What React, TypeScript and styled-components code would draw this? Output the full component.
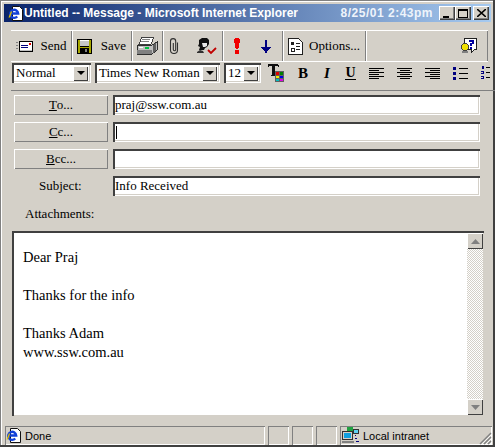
import React from "react";
import styled, { createGlobalStyle, css } from "styled-components";

const GlobalStyle = createGlobalStyle`
  html, body {
    margin: 0;
    padding: 0;
    background: #d4d0c8;
  }
`;

const raised = css`
  box-shadow: inset 1px 1px 0 #ffffff, inset -1px -1px 0 #808080;
`;

const sunken = css`
  box-shadow: inset 2px 2px 0 #404040, inset -1px -1px 0 #ffffff,
    inset -2px -2px 0 #d4d0c8;
`;

const Send = () => (
  <svg width="17" height="11" viewBox="0 0 17 11" shapeRendering="crispEdges">
    <path d="M0 1h2v1H0zM0 4h2v1H0zM0 7h2v1H0z" fill="#808080" />
    <rect x="3" y="0" width="14" height="11" fill="#000" />
    <rect x="4" y="1" width="12" height="8" fill="#fff" />
    <rect x="5" y="4" width="7" height="1" fill="#000080" />
    <rect x="5" y="6" width="7" height="1" fill="#000080" />
    <rect x="13" y="2" width="2" height="2" fill="#e00000" />
    <rect x="4" y="9" width="12" height="1" fill="#c0c0c0" />
  </svg>
);

const Save = () => (
  <svg width="15" height="15" viewBox="0 0 15 15" shapeRendering="crispEdges">
    <rect width="15" height="15" fill="#000" />
    <rect x="1" y="1" width="13" height="13" fill="#a8a800" />
    <rect x="3" y="1" width="9" height="6" fill="#c8c8c8" />
    <rect x="3" y="7" width="9" height="1" fill="#000" />
    <rect x="3" y="9" width="9" height="5" fill="#000" />
    <rect x="8" y="10" width="2" height="3" fill="#808080" />
    <rect x="3" y="1" width="9" height="1" fill="#fff" />
  </svg>
);

const Printer = () => (
  <svg width="22" height="19" viewBox="0 0 22 19" shapeRendering="crispEdges">
    <path d="M6 0h12l-3 7H3z" fill="#fff" stroke="#404040" />
    <path d="M6 2h8M5 4h8" stroke="#808080" />
    <path d="M1 8h15l5-3v8l-5 4H1z" fill="#c0c0c0" stroke="#303030" />
    <path d="M17 8l3-2v7l-3 3z" fill="#606060" />
    <rect x="1" y="13" width="15" height="4" fill="#808080" />
    <rect x="9" y="10" width="4" height="2" fill="#00c040" />
    <rect x="3" y="10" width="4" height="1" fill="#fff" />
  </svg>
);

const Clip = () => (
  <svg width="10" height="16" viewBox="0 0 10 16" fill="none">
    <path
      d="M8 4.5v7.5a3.5 3.5 0 0 1-7 0V3.2a2.6 2.6 0 0 1 5.2 0v8.3a1.2 1.2 0 0 1-2.4 0V5"
      stroke="#303030"
      strokeWidth="1.1"
      transform="translate(.5 0)"
    />
  </svg>
);

const Sign = () => (
  <svg width="21" height="17" viewBox="0 0 21 17">
    <path d="M3 2l3-2h5l2 2v4l-2 3-2 1-1 2H3l1-3-2-1 1-2z" fill="#101010" />
    <path d="M6 5h5v3l-2 1H7z" fill="#e8e8e8" />
    <path d="M1 14l3-2 3 1 1 2H1z" fill="#303030" />
    <path d="M12 12l3 3 5-5" fill="none" stroke="#c00000" strokeWidth="1.8" />
  </svg>
);

const Bang = () => (
  <svg width="6" height="16" viewBox="0 0 6 16" shapeRendering="crispEdges">
    <path d="M1 0h4v1h1v4H5v5H4v1H2v-1H1V5H0V1h1z" fill="#f00000" />
    <rect x="1" y="12" width="4" height="4" fill="#f00000" />
  </svg>
);

const Down = () => (
  <svg width="10" height="13" viewBox="0 0 10 13" shapeRendering="crispEdges">
    <path d="M4 0h2v7h4v1H9v1H8v1H7v1H6v2H4v-2H3v-1H2V9H1V8H0V7h4z" fill="#000080" />
  </svg>
);

const Options = () => (
  <svg width="15" height="17" viewBox="0 0 15 17" shapeRendering="crispEdges">
    <path d="M0.5 0.5h10l4 4v12h-14z" fill="#fff" stroke="#202020" />
    <rect x="3" y="4" width="3" height="3" fill="#202020" />
    <rect x="3" y="10" width="3" height="3" fill="none" stroke="#202020" />
    <path d="M8 5h4v1H8zM8 11h4v1H8zM8 8h4v1H8z" fill="#202020" />
  </svg>
);

const Help = () => (
  <svg width="16" height="17" viewBox="0 0 16 17" shapeRendering="crispEdges">
    <path d="M3.5 0.5h12v11h-2l-3 3v-3h-7z" fill="#fff" stroke="#202020" />
    <circle cx="4" cy="9" r="3.5" fill="#f0e000" stroke="#404040" />
    <path d="M1 13h6v2H1z" fill="#808080" />
    <path d="M8 2h5v4h-2v2H9V5h2V4H8zM9 9h2v2H9z" fill="#0000a0" />
  </svg>
);

const FontColor = () => (
  <svg width="16" height="18" viewBox="0 0 16 18" shapeRendering="crispEdges">
    <path d="M0 0h10v1h1v2h-1V2H7v9h1v1H3v-1h1V2H1v1H0z" fill="#101010" />
    <rect x="7" y="7" width="9" height="11" fill="#606060" />
    <rect x="8" y="8" width="3" height="3" fill="#e00000" />
    <rect x="12" y="8" width="3" height="3" fill="#008000" />
    <rect x="8" y="12" width="3" height="2" fill="#f0f000" />
    <rect x="12" y="12" width="3" height="2" fill="#0000e0" />
    <rect x="8" y="15" width="3" height="2" fill="#00c0c0" />
    <rect x="12" y="15" width="3" height="2" fill="#e000e0" />
  </svg>
);

const AlignLines = ({ mode }: { mode: "left" | "center" | "right" }) => {
  const rows = [
    [15, 0],
    [10, 2],
    [15, 4],
    [10, 6],
    [15, 8],
    [10, 10],
  ];
  return (
    <svg width="15" height="11" viewBox="0 0 15 11" shapeRendering="crispEdges">
      {rows.map(([w, y]) => (
        <rect
          key={y}
          x={mode === "left" ? 0 : mode === "center" ? (15 - w) / 2 : 15 - w}
          y={y}
          width={w}
          height="1"
          fill="#000"
        />
      ))}
    </svg>
  );
};

const Bullets = () => (
  <svg width="15" height="13" viewBox="0 0 15 13" shapeRendering="crispEdges">
    <path d="M0 0h3v3H0zM0 5h3v3H0zM0 10h3v3H0z" fill="#000080" />
    <path d="M6 1h9v1H6zM6 6h9v1H6zM6 11h9v1H6z" fill="#000" />
  </svg>
);

const Numbered = () => (
  <svg width="9" height="14" viewBox="0 0 9 14" shapeRendering="crispEdges">
    <path d="M1 0h2v3H1zM0 5h3v1H0zM2 6h1v1H2zM0 7h3v1H0zM0 10h3v1H0zM0 12h3v1H0zM2 11h1v1H2z" fill="#000080" />
    <path d="M5 1h4v1H5zM5 6h4v1H5zM5 11h4v1H5z" fill="#000" />
  </svg>
);

const IeLogo = () => (
  <svg width="15" height="15" viewBox="0 0 15 15">
    <path d="M4.5 0.5h7l3 3v11h-10z" fill="#fff" stroke="#101010" />
    <path
      d="M2 7.5h8.2a4 4 0 1 0-1 3"
      fill="none"
      stroke="#1040d8"
      strokeWidth="2.4"
    />
    <path d="M0.5 11.5L3 5l1 1-2 5.5z" fill="#e0c000" />
  </svg>
);

const ZoneIcon = () => (
  <svg width="17" height="17" viewBox="0 0 17 17" shapeRendering="crispEdges">
    <rect x="5" y="0" width="6" height="4" fill="#20a040" />
    <rect x="11.5" y="2.5" width="5" height="4" fill="#60d0f0" stroke="#303030" />
    <rect x="0.5" y="4.5" width="10" height="8" fill="#d4d0c8" stroke="#303030" />
    <rect x="2" y="6" width="7" height="5" fill="#10a0e0" />
    <rect x="0" y="14" width="12" height="2" fill="#808080" />
    <path d="M13 8h1v1h-1zM13 11h2v1h-2zM14 14h3v1h-3z" fill="#000080" />
  </svg>
);

const Grip = () => (
  <svg width="13" height="13" viewBox="0 0 13 13">
    <path d="M1 12L12 1M5 12l7-7M9 12l3-3" stroke="#808080" strokeWidth="1.4" />
    <path d="M2.5 12.5l10-10M6.5 12.5l6-6M10.5 12.5l2-2" stroke="#fff" strokeWidth="0.8" />
  </svg>
);

export default function App() {
  return (
    <>
      <GlobalStyle />
      <Window>
        <TitleBar>
          <TitleIcon>
            <IeLogo />
          </TitleIcon>
          <TitleText>Untitled -- Message - Microsoft Internet Explorer</TitleText>
          <Clock>8/25/01 2:43pm</Clock>
          <WinButtons>
            <WinButton aria-label="Minimize">
              <svg width="8" height="9" viewBox="0 0 8 9">
                <rect x="0" y="7" width="6" height="2" fill="#000" />
              </svg>
            </WinButton>
            <WinButton aria-label="Maximize">
              <svg width="10" height="9" viewBox="0 0 10 9">
                <path d="M0 0h10v9H0zM1 2v6h8V2z" fillRule="evenodd" fill="#000" />
              </svg>
            </WinButton>
            <CloseButton aria-label="Close">
              <svg width="9" height="8" viewBox="0 0 9 8">
                <path d="M0 0l9 8M9 0L0 8" stroke="#000" strokeWidth="1.6" />
              </svg>
            </CloseButton>
          </WinButtons>
        </TitleBar>

        <Toolbars>
          <MainToolbar>
            <ToolGroup $width={61}>
              <Send />
              <ToolLabel $gap={8}>Send</ToolLabel>
            </ToolGroup>
            <ToolGroup $width={60}>
              <Save />
              <ToolLabel $gap={9}>Save</ToolLabel>
            </ToolGroup>
            <ToolGroup $width={31}>
              <Printer />
            </ToolGroup>
            <ToolGroup $width={60}>
              <Clip />
              <IconGap />
              <Sign />
            </ToolGroup>
            <ToolGroup $width={60}>
              <Bang />
              <IconGapWide />
              <Down />
            </ToolGroup>
            <ToolGroup $width={83}>
              <Options />
              <ToolLabel $gap={6}>Options...</ToolLabel>
            </ToolGroup>
            <HelpSlot>
              <Help />
            </HelpSlot>
          </MainToolbar>

          <FormatToolbar>
            <Combo $width={79}>
              <ComboText>Normal</ComboText>
              <ComboArrow>
                <Caret />
              </ComboArrow>
            </Combo>
            <Combo $width={125}>
              <ComboText>Times New Roman</ComboText>
              <ComboArrow>
                <Caret />
              </ComboArrow>
            </Combo>
            <Combo $width={37}>
              <ComboText>12</ComboText>
              <ComboArrow>
                <Caret />
              </ComboArrow>
            </Combo>
            <FormatIcons>
              <ColorSlot $width={24}>
                <FontColor />
              </ColorSlot>
              <FormatSlot $width={24}>
                <StyleGlyph $italic={false}>B</StyleGlyph>
              </FormatSlot>
              <FormatSlot $width={24}>
                <StyleGlyph $italic>I</StyleGlyph>
              </FormatSlot>
              <FormatSlot $width={23}>
                <UnderGlyph>U</UnderGlyph>
              </FormatSlot>
              <FormatSlot $width={28}>
                <AlignLines mode="left" />
              </FormatSlot>
              <FormatSlot $width={28}>
                <AlignLines mode="center" />
              </FormatSlot>
              <FormatSlot $width={28}>
                <AlignLines mode="right" />
              </FormatSlot>
              <FormatSlot $width={28}>
                <Bullets />
              </FormatSlot>
              <FormatSlot $width={22}>
                <Numbered />
              </FormatSlot>
            </FormatIcons>
          </FormatToolbar>
        </Toolbars>

        <Fields>
          <FieldRow>
            <AddressButton>
              <u>T</u>o...
            </AddressButton>
            <FieldInput>praj@ssw.com.au</FieldInput>
          </FieldRow>
          <FieldRow>
            <AddressButton>
              <u>C</u>c...
            </AddressButton>
            <FieldInput>
              <Cursor />
            </FieldInput>
          </FieldRow>
          <FieldRow>
            <AddressButton>
              <u>B</u>cc...
            </AddressButton>
            <FieldInput />
          </FieldRow>
          <FieldRow>
            <SubjectLabel>Subject:</SubjectLabel>
            <FieldInput>Info Received</FieldInput>
          </FieldRow>
          <AttachLabel>Attachments:</AttachLabel>
        </Fields>

        <BodyFrame>
          <Message>
            <p>Dear Praj</p>
            <p>Thanks for the info</p>
            <p>
              Thanks Adam
              <br />
              www.ssw.com.au
            </p>
          </Message>
          <ScrollBar>
            <ScrollButton>
              <svg width="9" height="5" viewBox="0 0 9 5">
                <path d="M4.5 0L9 5H0z" fill="#808080" />
              </svg>
            </ScrollButton>
            <ScrollTrack />
            <ScrollButton>
              <svg width="9" height="5" viewBox="0 0 9 5">
                <path d="M0 0h9L4.5 5z" fill="#808080" />
              </svg>
            </ScrollButton>
          </ScrollBar>
        </BodyFrame>

        <StatusBar>
          <StatusMain>
            <IeLogo />
            <StatusText>Done</StatusText>
          </StatusMain>
          <StatusCell />
          <StatusCell />
          <StatusCell />
          <StatusZone>
            <ZoneIcon />
            <StatusText>Local intranet</StatusText>
            <GripSlot>
              <Grip />
            </GripSlot>
          </StatusZone>
        </StatusBar>
      </Window>
    </>
  );
}

const Window = styled.div`
  box-sizing: border-box;
  width: 495px;
  height: 447px;
  padding: 4px;
  background: #d4d0c8;
  display: flex;
  flex-direction: column;
  overflow: hidden;
  box-shadow: inset -2px -2px 0 #404040, inset 1px 1px 0 #808080,
    inset 2px 2px 0 #ffffff;
  font-family: "Liberation Serif", "Times New Roman", serif;
  font-size: 12px;
  color: #000;
`;

const TitleBar = styled.div`
  flex: none;
  height: 18px;
  display: flex;
  align-items: center;
  background: linear-gradient(90deg, #0a246a 0%, #a6caf0 100%);
  padding: 0 2px 0 4px;
`;

const TitleIcon = styled.span`
  display: flex;
  width: 16px;
  margin-top: 1px;
`;

const TitleText = styled.span`
  flex: 1;
  font: bold 12px "Liberation Sans", Arial, sans-serif;
  color: #fff;
  white-space: nowrap;
`;

const Clock = styled.span`
  font: bold 12px "Liberation Sans", Arial, sans-serif;
  letter-spacing: 0.5px;
  color: #eef4fb;
  white-space: nowrap;
  margin-right: 6px;
`;

const WinButtons = styled.div`
  display: flex;
`;

const WinButton = styled.button`
  width: 16px;
  height: 14px;
  padding: 0;
  border: none;
  display: flex;
  align-items: center;
  justify-content: center;
  background: #d4d0c8;
  box-shadow: inset 1px 1px 0 #ffffff, inset -1px -1px 0 #404040,
    inset -2px -2px 0 #808080;
`;

const CloseButton = styled(WinButton)`
  margin-left: 2px;
`;

const Toolbars = styled.div`
  flex: none;
  margin: 8px -4px 0 7px;
  display: flex;
  flex-direction: column;
  border-bottom: 1px solid #808080;
  height: 60px;
`;

const MainToolbar = styled.div`
  display: flex;
  height: 32px;
  margin-right: 7px;
  border-top: 1px solid #ffffff;
  border-bottom: 1px solid #ffffff;
  box-sizing: border-box;
`;

const ToolGroup = styled.div<{ $width: number }>`
  flex: none;
  box-sizing: border-box;
  width: ${({ $width }) => $width}px;
  display: flex;
  align-items: center;
  justify-content: center;
  border-right: 1px solid #808080;
  box-shadow: 1px 0 0 #ffffff;
`;

const ToolLabel = styled.span<{ $gap: number }>`
  margin-left: ${({ $gap }) => $gap}px;
  font-size: 13px;
  white-space: nowrap;
`;

const IconGap = styled.span`
  width: 17px;
`;

const IconGapWide = styled.span`
  width: 21px;
`;

const HelpSlot = styled.div`
  flex: 1;
  display: flex;
  align-items: center;
  justify-content: flex-end;
  padding-right: 10px;
  border-right: 1px solid #808080;
`;

const FormatToolbar = styled.div`
  display: flex;
  align-items: flex-start;
  gap: 4px;
  padding: 1px 0 0 1px;
`;

const Combo = styled.div<{ $width: number }>`
  flex: none;
  box-sizing: border-box;
  width: ${({ $width }) => $width}px;
  height: 20px;
  background: #fff;
  display: flex;
  align-items: center;
  padding: 2px 3px 2px 2px;
  ${sunken}
`;

const ComboText = styled.span`
  flex: 1;
  padding-left: 2px;
  font-size: 13px;
  white-space: nowrap;
  overflow: hidden;
`;

const ComboArrow = styled.span`
  flex: none;
  width: 15px;
  height: 15px;
  background: #d4d0c8;
  display: flex;
  align-items: center;
  justify-content: center;
  box-shadow: inset 1px 1px 0 #ffffff, inset -1px -1px 0 #404040;
`;

const Caret = styled.span`
  width: 0;
  height: 0;
  border-left: 4px solid transparent;
  border-right: 4px solid transparent;
  border-top: 4px solid #000;
`;

const FormatIcons = styled.div`
  display: flex;
  align-items: center;
  height: 20px;
  margin-left: 2px;
`;

const FormatSlot = styled.span<{ $width: number }>`
  flex: none;
  width: ${({ $width }) => $width}px;
  display: flex;
  align-items: center;
  justify-content: center;
`;

const ColorSlot = styled(FormatSlot)`
  justify-content: flex-start;
  padding-left: 1px;
  box-sizing: border-box;
`;

const StyleGlyph = styled.span<{ $italic: boolean }>`
  font-size: 15px;
  font-weight: 700;
  font-style: ${({ $italic }) => ($italic ? "italic" : "normal")};
`;

const UnderGlyph = styled.span`
  font-size: 14px;
  font-weight: 700;
  line-height: 13px;
  border-bottom: 1px solid #000;
`;

const Fields = styled.div`
  flex: none;
  display: flex;
  flex-direction: column;
  gap: 7px;
  padding: 4px 11px 0 10px;
`;

const FieldRow = styled.div`
  display: flex;
  align-items: center;
  gap: 5px;
  height: 20px;
`;

const AddressButton = styled.div`
  flex: none;
  box-sizing: border-box;
  width: 94px;
  height: 20px;
  display: flex;
  align-items: center;
  justify-content: center;
  background: #d4d0c8;
  font-size: 13px;
  ${raised}
`;

const FieldInput = styled.div`
  flex: 1;
  box-sizing: border-box;
  height: 20px;
  display: flex;
  align-items: center;
  padding: 0 2px;
  background: #fff;
  font-size: 13px;
  ${sunken}
`;

const Cursor = styled.span`
  width: 1px;
  height: 13px;
  margin-left: 1px;
  background: #000;
`;

const SubjectLabel = styled.span`
  flex: none;
  width: 94px;
  padding-left: 25px;
  box-sizing: border-box;
  font-size: 13px;
`;

const AttachLabel = styled.div`
  margin: 3px 0 0 11px;
  height: 16px;
  line-height: 16px;
  font-size: 13px;
`;

const BodyFrame = styled.div`
  flex: none;
  box-sizing: border-box;
  height: 185px;
  margin: 9px 7px 0 8px;
  padding: 2px 1px 1px 2px;
  display: flex;
  background: #fff;
  box-shadow: inset 2px 2px 0 #404040, inset -1px -1px 0 #d4d0c8;
`;

const Message = styled.div`
  flex: 1;
  padding: 15px 0 0 9px;
  font-size: 14.5px;
  line-height: 19px;

  p {
    margin: 0 0 19px;
  }
`;

const ScrollBar = styled.div`
  flex: none;
  width: 16px;
  display: flex;
  flex-direction: column;
`;

const ScrollButton = styled.div`
  flex: none;
  height: 16px;
  display: flex;
  align-items: center;
  justify-content: center;
  background: #d4d0c8;
  box-shadow: inset 1px 1px 0 #ffffff, inset -1px -1px 0 #404040;
`;

const ScrollTrack = styled.div`
  flex: 1;
  background: repeating-conic-gradient(#ffffff 0 25%, #d4d0c8 0 50%) 0 0 / 2px 2px;
`;

const StatusBar = styled.div`
  flex: none;
  margin: 10px -1px 0 1px;
  height: 19px;
  display: flex;
  gap: 3px;
  font-family: "Liberation Sans", Arial, sans-serif;
  font-size: 11px;
`;

const statusCell = css`
  box-sizing: border-box;
  box-shadow: inset 1px 1px 0 #808080, inset -1px -1px 0 #ffffff;
  display: flex;
  align-items: center;
`;

const StatusMain = styled.div`
  ${statusCell}
  width: 260px;
  padding-left: 1px;
`;

const StatusCell = styled.div`
  ${statusCell}
  width: 21px;
`;

const StatusZone = styled.div`
  ${statusCell}
  position: relative;
  flex: 1;
  padding-left: 2px;
`;

const StatusText = styled.span`
  margin-left: 4px;
  white-space: nowrap;
`;

const GripSlot = styled.span`
  position: absolute;
  right: 0;
  bottom: 0;
  display: flex;
`;
